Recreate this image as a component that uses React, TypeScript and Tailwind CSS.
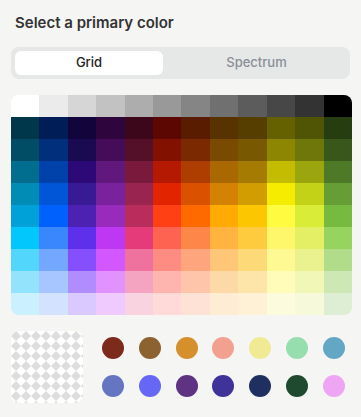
import { useState } from 'react'

const GRID: string[][] = [
  ['#ffffff', '#ebebeb', '#d6d6d6', '#c2c2c2', '#adadad', '#999999', '#858585', '#707070', '#5c5c5c', '#474747', '#333333', '#000000'],
  ['#00374a', '#011d57', '#11053b', '#2e063d', '#3c071b', '#5c0701', '#5a1c00', '#583300', '#563d00', '#666100', '#4f5504', '#263e0f'],
  ['#004d65', '#012f7b', '#1a0a52', '#450d59', '#551029', '#831100', '#7b2900', '#7a4a00', '#785800', '#8d8602', '#6f760a', '#38571a'],
  ['#016e8f', '#0042a9', '#2c0977', '#61187c', '#791a3d', '#b51a00', '#ad3e00', '#a96800', '#a67b01', '#c4bc00', '#9ba50e', '#4e7a27'],
  ['#008cb4', '#0056d6', '#371a94', '#7a219e', '#99244f', '#e22400', '#da5100', '#d38301', '#d19d01', '#f5ec00', '#c3d117', '#669d34'],
  ['#00a1d8', '#0061fd', '#4d22b2', '#982abc', '#b92d5d', '#ff4015', '#ff6a00', '#ffab01', '#fcc700', '#fefb41', '#d9ec37', '#76bb40'],
  ['#01c7fc', '#3a87fd', '#5e30eb', '#be38f3', '#e63b7a', '#fe6250', '#fe8648', '#feb43f', '#fecb3e', '#fff76b', '#e4ef65', '#96d35f'],
  ['#52d6fc', '#74a7ff', '#864ffd', '#d357fe', '#ee719e', '#ff8c82', '#fea57d', '#fec777', '#fed977', '#fff994', '#eaf28f', '#b1dd8b'],
  ['#93e3fc', '#a7c6ff', '#b18cfe', '#e292fe', '#f4a4c0', '#ffb5af', '#ffc5ab', '#fed9a8', '#fde4a8', '#fffbb9', '#f1f7b7', '#cde8b5'],
  ['#cbf0ff', '#d3e2ff', '#d9c9fe', '#efcafe', '#f9d3e0', '#ffdad8', '#ffe2d6', '#feecd4', '#fef1d5', '#fdfbdd', '#f6fadb', '#deeed4'],
]

const SAVED: string[][] = [
  ['#7b2a1c', '#8b6230', '#d58f2b', '#f2a190', '#f0ea94', '#96deae', '#63a7c4'],
  ['#6575c2', '#6667f5', '#5d3382', '#3f3298', '#1f2f5f', '#1f4a2f', '#eea6f4'],
]

function Checker() {
  return (
    <svg width="72" height="72" className="block">
      <defs>
        <pattern id="diamonds" width="10" height="10" patternUnits="userSpaceOnUse">
          <rect width="10" height="10" fill="#ffffff" />
          <polygon points="5,0 10,5 5,10 0,5" fill="#dddddd" />
        </pattern>
      </defs>
      <rect width="72" height="72" fill="url(#diamonds)" />
    </svg>
  )
}

export default function App() {
  const [tab, setTab] = useState<'grid' | 'spectrum'>('grid')

  return (
    <div
      className="w-[361px] h-[417px] bg-[#f5f5f4] px-[11px] pt-[13px]"
      style={{ fontFamily: 'Inter, "Noto Sans", sans-serif' }}
    >
      <h1 className="pl-1 text-[15px] leading-5 font-semibold text-[#333333]">Select a primary color</h1>

      {/* Segmented control */}
      <div className="mt-[14px] h-[32px] rounded-lg bg-[#e6e7e7] p-1 flex">
        <button
          onClick={() => setTab('grid')}
          className={`w-[148px] rounded-md text-[13px] font-medium ${tab === 'grid' ? 'bg-white text-[#222222]' : 'text-[#8a8f98]'}`}
        >
          Grid
        </button>
        <button
          onClick={() => setTab('spectrum')}
          className={`flex-1 ml-1 rounded-md text-[13px] font-medium ${tab === 'spectrum' ? 'bg-white text-[#222222]' : 'text-[#8a8f98]'}`}
        >
          Spectrum
        </button>
      </div>

      {/* Color grid */}
      <div className="mt-[16px] w-[341px] rounded-lg overflow-hidden grid grid-cols-12">
        {GRID.flatMap((row, r) =>
          row.map((c, i) => <div key={`${r}-${i}`} className="h-[22px]" style={{ backgroundColor: c }} />),
        )}
      </div>

      {/* Saved colors */}
      <div className="mt-[16px] flex items-center">
        <div className="rounded-lg overflow-hidden shrink-0">
          <Checker />
        </div>
        <div className="ml-[19px] w-[243px] flex flex-col gap-[16px]">
          {SAVED.map((row, r) => (
            <div key={r} className="flex justify-between">
              {row.map((c) => (
                <div key={c} className="w-[22px] h-[22px] rounded-full" style={{ backgroundColor: c }} />
              ))}
            </div>
          ))}
        </div>
      </div>
    </div>
  )
}
